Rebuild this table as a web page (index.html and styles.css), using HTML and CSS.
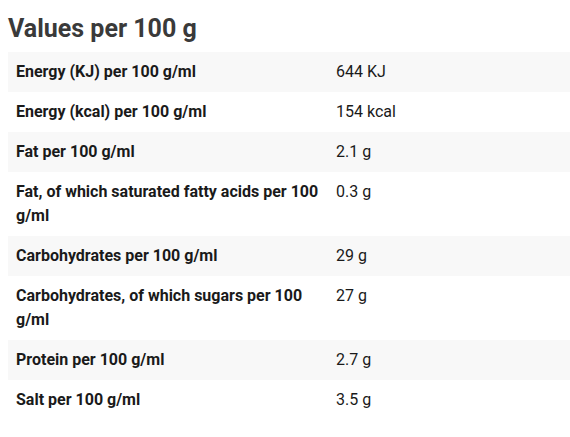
FILE: index.html
```html
<!DOCTYPE html>
<html>
<head>
  <meta charset="UTF-8">
  <title>Nutrition values</title>
  <link rel="stylesheet" href="styles.css">
</head>
<body>

  <h2 class="title">Values per 100 g</h2>

  <table class="values">
    <tr>
      <th>Energy (KJ) per 100 g/ml</th>
      <td>644 KJ</td>
    </tr>
    <tr>
      <th>Energy (kcal) per 100 g/ml</th>
      <td>154 kcal</td>
    </tr>
    <tr>
      <th>Fat per 100 g/ml</th>
      <td>2.1 g</td>
    </tr>
    <tr>
      <th>Fat, of which saturated fatty acids per 100 g/ml</th>
      <td>0.3 g</td>
    </tr>
    <tr>
      <th>Carbohydrates per 100 g/ml</th>
      <td>29 g</td>
    </tr>
    <tr>
      <th>Carbohydrates, of which sugars per 100 g/ml</th>
      <td>27 g</td>
    </tr>
    <tr>
      <th>Protein per 100 g/ml</th>
      <td>2.7 g</td>
    </tr>
    <tr>
      <th>Salt per 100 g/ml</th>
      <td>3.5 g</td>
    </tr>
  </table>

</body>
</html>
```

FILE: styles.css
```css
body {
  margin: 0;
  padding: 0 0 0 8px;
  font-family: Roboto, "Liberation Sans", sans-serif;
  background-color: #fff;
  color: #1a1a1a;
  overflow: hidden;
}

.title {
  margin: 0;
  padding-top: 14px;
  height: 38px;
  font-size: 25px;
  font-weight: 700;
  line-height: 30px;
  color: #3a3a3a;
}

.values {
  border-collapse: collapse;
  width: 580px;
  font-size: 16px;
  line-height: 24px;
}

.values tr:nth-child(odd) {
  background-color: #f8f8f8;
}

.values th,
.values td {
  padding: 8px;
  vertical-align: top;
  text-align: left;
}

.values th {
  width: 304px;
  font-weight: 700;
}

.values td {
  font-weight: 400;
}
```
